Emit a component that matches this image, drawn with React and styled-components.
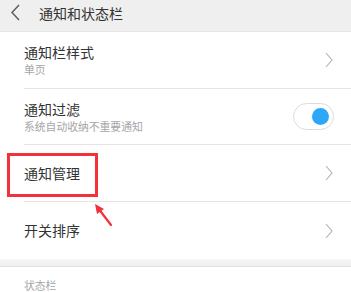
import React from "react";
import styled, { createGlobalStyle } from "styled-components";

const Global = createGlobalStyle`
  html, body { margin: 0; padding: 0; background: #ffffff; }
  body { font-family: "Noto Sans CJK SC", "Noto Sans", sans-serif; }
  * { box-sizing: border-box; }
`;

const Page = styled.div`
  position: relative;
  width: 351px;
  height: 292px;
  overflow: hidden;
  background: #ffffff;
`;

const Header = styled.div`
  height: 32px;
  background: #efefef;
  border-bottom: 1px solid #e6e6e6;
  display: flex;
  align-items: center;
  padding: 0 0 6px 11px;
  gap: 19px;
`;

const HeaderTitle = styled.div`
  font-size: 14px;
  line-height: 18px;
  color: #333333;
`;

const Row = styled.div`
  padding-left: 24px;
  height: ${(p) => p.$h}px;
`;

const RowInner = styled.div`
  height: 100%;
  display: flex;
  align-items: center;
  justify-content: space-between;
  padding-right: ${(p) => (p.$toggle ? 17 : 18)}px;
  border-bottom: ${(p) => (p.$last ? "none" : "1px solid #e4e4e4")};
`;

const Texts = styled.div`
  display: flex;
  flex-direction: column;
`;

const Title = styled.div`
  font-size: 14px;
  line-height: 19px;
  color: #333333;
`;

const Sub = styled.div`
  font-size: 10.8px;
  line-height: 15px;
  color: #a6a6a6;
`;

const Toggle = styled.div`
  width: 41px;
  height: 27px;
  border: 1px solid #dcdcdc;
  border-radius: 14px;
  background: #ffffff;
  display: flex;
  align-items: center;
  justify-content: flex-end;
  padding-right: 4px;
`;

const Knob = styled.div`
  width: 17px;
  height: 17px;
  border-radius: 50%;
  background: #2ea8f6;
`;

const Band = styled.div`
  height: 8px;
  background: linear-gradient(#f6f6f6, #efefef);
  border-bottom: 1px solid #e2e2e2;
`;

const SectionLabel = styled.div`
  padding: 11px 0 0 24px;
  font-size: 10.8px;
  line-height: 15px;
  color: #a6a6a6;
`;

const Highlight = styled.div`
  position: absolute;
  left: 7px;
  top: 153px;
  width: 91px;
  height: 44px;
  border: 3px solid #f2313b;
`;

const ArrowSvg = styled.svg`
  position: absolute;
  left: 90px;
  top: 200px;
`;

const Chevron = () => (
  <svg width="8" height="16" viewBox="0 0 8 16">
    <polyline points="1,1 7,8 1,15" fill="none" stroke="#b0b0b0" strokeWidth="1.1" />
  </svg>
);

const Back = () => (
  <svg width="9" height="17" viewBox="0 0 9 17">
    <polyline points="8,1 1,8.5 8,16" fill="none" stroke="#5a5a5a" strokeWidth="1.4" />
  </svg>
);

export default function App() {
  return (
    <Page>
      <Global />
      <Header>
        <Back />
        <HeaderTitle>通知和状态栏</HeaderTitle>
      </Header>
      <Row $h={57}>
        <RowInner>
          <Texts>
            <Title>通知栏样式</Title>
            <Sub>单页</Sub>
          </Texts>
          <Chevron />
        </RowInner>
      </Row>
      <Row $h={56}>
        <RowInner $toggle>
          <Texts>
            <Title>通知过滤</Title>
            <Sub>系统自动收纳不重要通知</Sub>
          </Texts>
          <Toggle>
            <Knob />
          </Toggle>
        </RowInner>
      </Row>
      <Row $h={57}>
        <RowInner>
          <Title>通知管理</Title>
          <Chevron />
        </RowInner>
      </Row>
      <Row $h={57}>
        <RowInner $last>
          <Title>开关排序</Title>
          <Chevron />
        </RowInner>
      </Row>
      <Band />
      <SectionLabel>状态栏</SectionLabel>
      <Highlight />
      <ArrowSvg width="26" height="28" viewBox="0 0 26 28">
        <line x1="21" y1="25" x2="8" y2="8" stroke="#f2313b" strokeWidth="2.2" strokeLinecap="round" />
        <polygon points="5,4 14,9 7,14" fill="#f2313b" />
      </ArrowSvg>
    </Page>
  );
}
